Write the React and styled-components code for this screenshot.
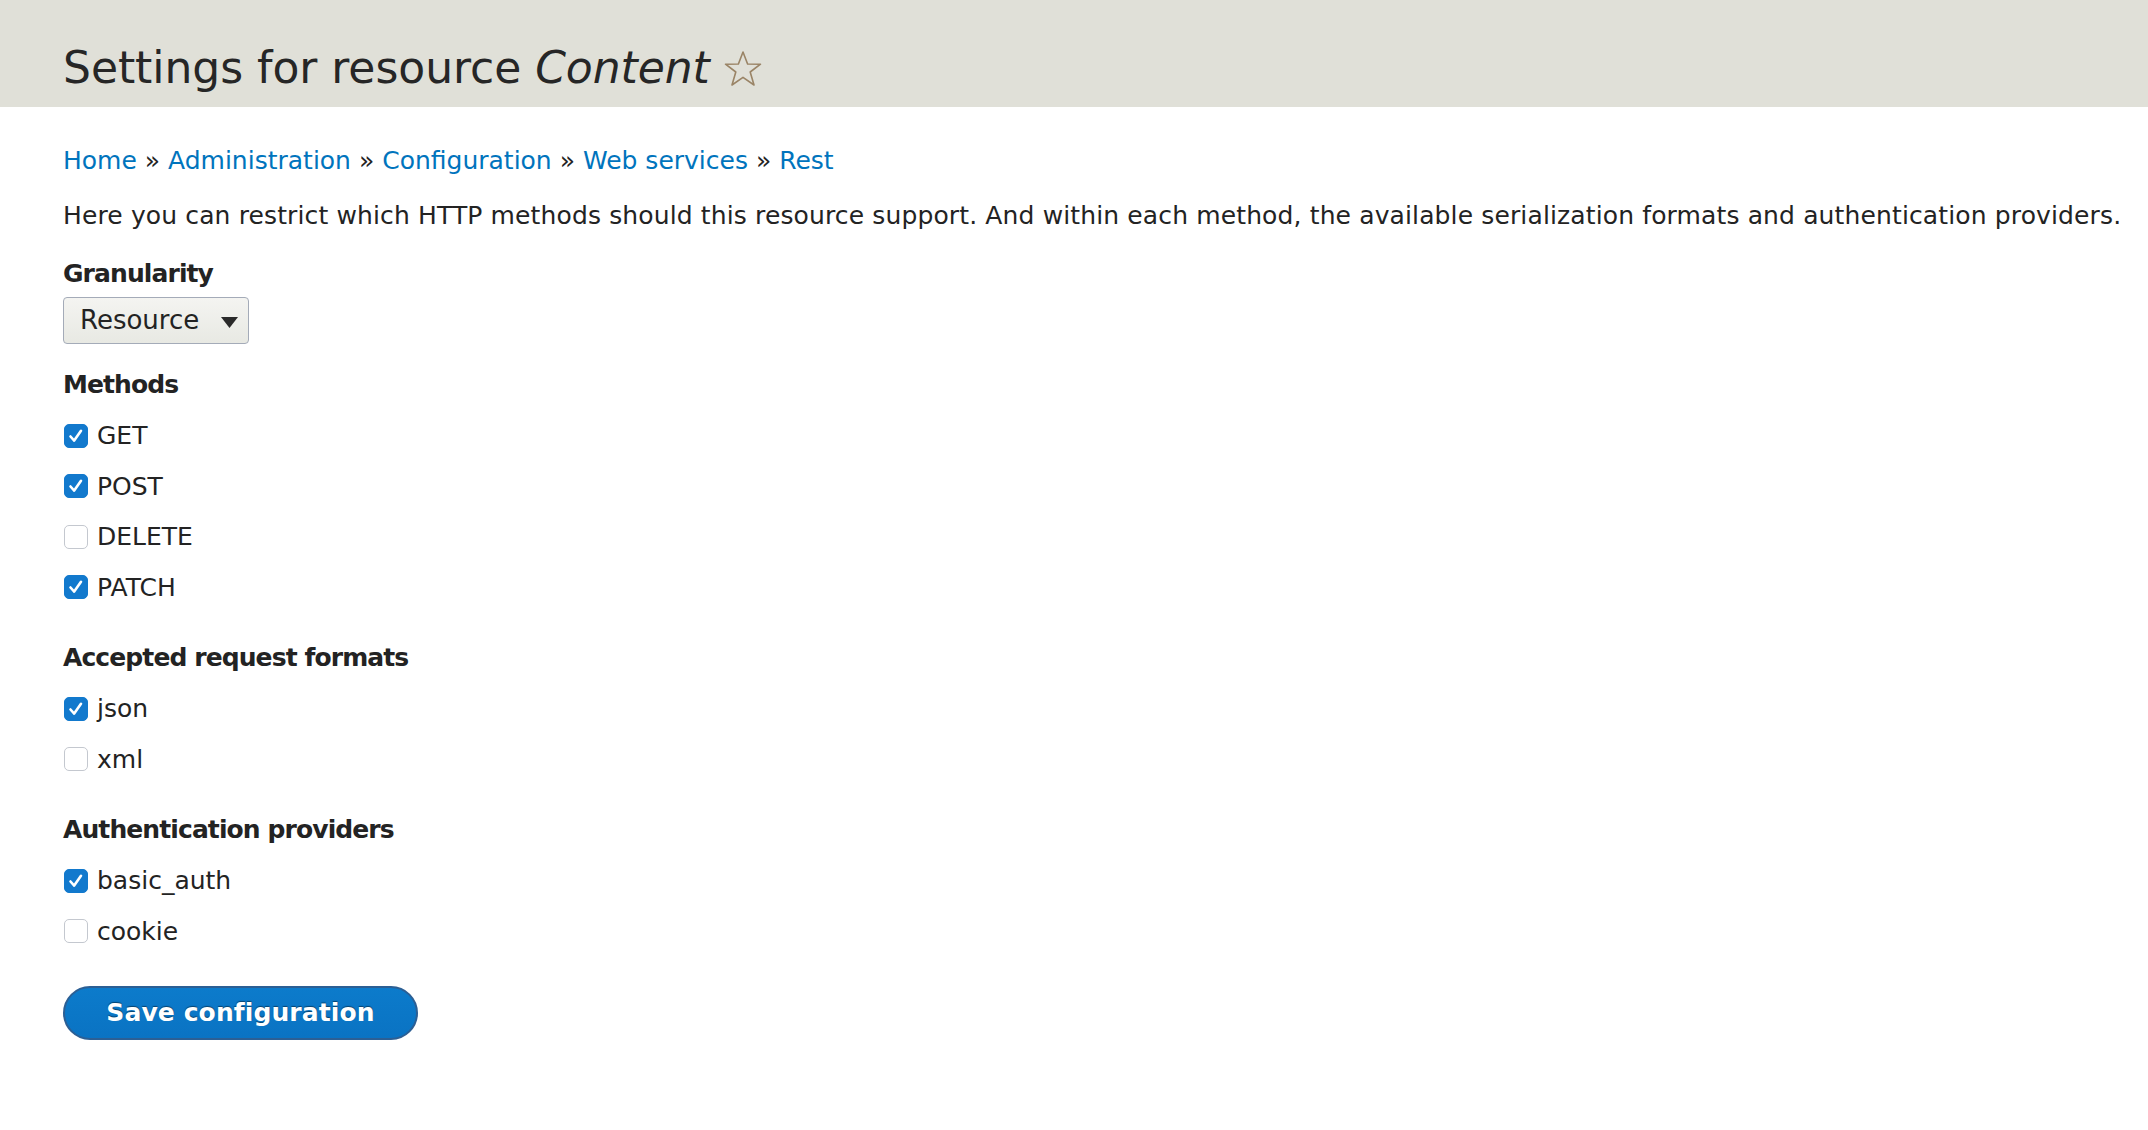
import React from "react";
import styled, { createGlobalStyle } from "styled-components";

const GlobalStyle = createGlobalStyle`
  html, body {
    margin: 0;
    padding: 0;
    background: #ffffff;
  }
  body {
    font-family: "DejaVu Sans", "Liberation Sans", sans-serif;
    color: #232323;
  }
`;

const Header = styled.header`
  height: 107px;
  background: #e0e0d8;
  padding: 0 63px;
  display: flex;
  align-items: flex-end;
  box-sizing: border-box;
`;

const Title = styled.h1`
  margin: 0 0 12px;
  font-size: 44px;
  line-height: 1.2;
  font-weight: normal;
  letter-spacing: -0.05px;
  color: #262626;
  display: flex;
  align-items: center;
  gap: 13px;
  em {
    font-style: italic;
  }
`;

const Page = styled.main`
  padding: 34px 63px 60px;
  font-size: 25px;
  line-height: 39px;
`;

const Breadcrumb = styled.nav`
  color: #232323;
  a {
    color: #0074bd;
    text-decoration: none;
  }
`;

const Description = styled.p`
  margin: 16px 0 0;
  white-space: nowrap;
  letter-spacing: 0.13px;
`;

const FormItem = styled.div`
  margin-top: ${(p) => p.$top || 0}px;
  display: flex;
  flex-direction: column;
  align-items: flex-start;
`;

const Label = styled.label`
  font-weight: bold;
  letter-spacing: -0.9px;
`;

const SelectWrap = styled.div`
  position: relative;
  margin-top: 4px;
`;

const Select = styled.select`
  appearance: none;
  -webkit-appearance: none;
  width: 186px;
  height: 47px;
  padding: 0 40px 0 16px;
  font: inherit;
  font-size: 26px;
  color: #232323;
  border: 1.5px solid #a4abb8;
  border-radius: 4px;
  background: linear-gradient(#f4f4f1, #e8e9e3);
  box-sizing: border-box;
`;

const Arrow = styled.svg`
  position: absolute;
  right: 11px;
  top: 20px;
  pointer-events: none;
`;

const Options = styled.div`
  display: flex;
  flex-direction: column;
  gap: 11.5px;
  margin-top: 12px;
`;

const Row = styled.label`
  display: flex;
  align-items: center;
  gap: 9px;
  cursor: pointer;
`;

const Box = styled.span`
  width: 24px;
  height: 24px;
  margin-left: 1px;
  border-radius: 5px;
  box-sizing: border-box;
  display: inline-flex;
  align-items: center;
  justify-content: center;
  background: ${(p) => (p.$checked ? "#1279cd" : "#ffffff")};
  border: 1.5px solid ${(p) => (p.$checked ? "#1279cd" : "#c4c8cf")};
`;

const SaveButton = styled.button`
  margin-top: 35px;
  width: 355px;
  height: 54px;
  border-radius: 27px;
  border: 2px solid #2c5f94;
  background: linear-gradient(#0c7bcb, #0a73c3);
  color: #ffffff;
  font: inherit;
  font-size: 25px;
  font-weight: bold;
  letter-spacing: 0.1px;
  text-shadow: 0 -1px 1px rgba(0, 0, 0, 0.45);
  cursor: pointer;
`;

function Star() {
  return (
    <svg width="40" height="38" viewBox="0 0 40 38" fill="none">
      <path
        d="M20 2 L24.6 14 L37.5 14.2 L27.2 22 L31 35 L20 27.4 L9 35 L12.8 22 L2.5 14.2 L15.4 14 Z"
        stroke="#9a8466"
        strokeWidth="1.6"
        strokeLinejoin="round"
      />
    </svg>
  );
}

function Checkbox({ checked, children }) {
  return (
    <Row>
      <Box $checked={checked}>
        {checked && (
          <svg width="20" height="20" viewBox="0 0 20 20" fill="none">
            <path d="M4.5 10.5 L8.2 14.6 L15 4.8" stroke="#fff" strokeWidth="2.6" strokeLinecap="round" strokeLinejoin="round" />
          </svg>
        )}
      </Box>
      {children}
    </Row>
  );
}

function CheckGroup({ title, items, top }) {
  return (
    <FormItem $top={top}>
      <Label>{title}</Label>
      <Options>
        {items.map(([name, on]) => (
          <Checkbox key={name} checked={on}>
            {name}
          </Checkbox>
        ))}
      </Options>
    </FormItem>
  );
}

export default function App() {
  return (
    <>
      <GlobalStyle />
      <Header>
        <Title>
          <span>
            Settings for resource <em>Content</em>
          </span>
          <Star />
        </Title>
      </Header>
      <Page>
        <Breadcrumb>
          <a href="#">Home</a> » <a href="#">Administration</a> » <a href="#">Configuration</a> »{" "}
          <a href="#">Web services</a> » <a href="#">Rest</a>
        </Breadcrumb>
        <Description>
          Here you can restrict which HTTP methods should this resource support. And within each method, the available
          serialization formats and authentication providers.
        </Description>
        <FormItem $top={19}>
          <Label>Granularity</Label>
          <SelectWrap>
            <Select defaultValue="resource">
              <option value="resource">Resource</option>
              <option value="method">Method</option>
            </Select>
            <Arrow width="17" height="11" viewBox="0 0 17 11">
              <path d="M0 0 H17 L8.5 11 Z" fill="#2a2a2a" />
            </Arrow>
          </SelectWrap>
        </FormItem>
        <CheckGroup
          top={21}
          title="Methods"
          items={[
            ["GET", true],
            ["POST", true],
            ["DELETE", false],
            ["PATCH", true],
          ]}
        />
        <CheckGroup
          top={31.5}
          title="Accepted request formats"
          items={[
            ["json", true],
            ["xml", false],
          ]}
        />
        <CheckGroup
          top={31.5}
          title="Authentication providers"
          items={[
            ["basic_auth", true],
            ["cookie", false],
          ]}
        />
        <SaveButton type="button">Save configuration</SaveButton>
      </Page>
    </>
  );
}
